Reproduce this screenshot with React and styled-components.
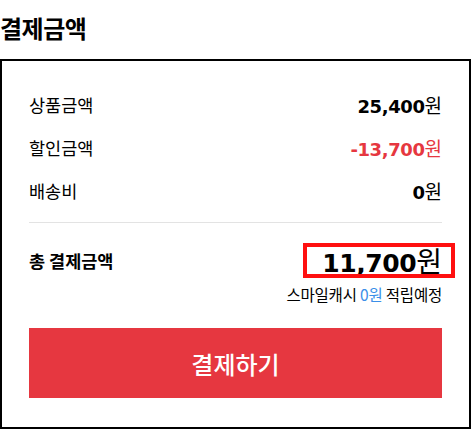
import React from "react";
import styled, { createGlobalStyle } from "styled-components";

const Global = createGlobalStyle`
  html, body { margin: 0; padding: 0; background: #fff; }
  body { font-family: "Noto Sans CJK KR", "Noto Sans", sans-serif; color: #000; }
  * { box-sizing: border-box; }
`;

const Page = styled.div`
  width: 471px;
  height: 429px;
  display: flex;
  flex-direction: column;
`;

const Title = styled.h2`
  margin: 0;
  padding-top: 11px;
  height: 59px;
  font-size: 24px;
  font-weight: 700;
  line-height: 34px;
  letter-spacing: -0.5px;
`;

const Box = styled.section`
  flex: 1;
  border: 2px solid #000;
  padding: 22px 27px 29px;
  display: flex;
  flex-direction: column;
`;

const Row = styled.div`
  display: flex;
  justify-content: space-between;
  align-items: center;
  height: 43px;
`;

const Label = styled.span`
  font-size: 17.5px;
  font-weight: ${(p) => (p.$bold ? 700 : 400)};
  line-height: 24px;
`;

const Value = styled.span`
  display: inline-flex;
  align-items: baseline;
  color: ${(p) => p.$color || "#000"};
`;

const Num = styled.span`
  font-family: "DejaVu Sans", Verdana, sans-serif;
  font-weight: 700;
  font-size: ${(p) => p.$size || 18}px;
  letter-spacing: -0.4px;
`;

const Won = styled.span`
  font-family: "Noto Sans CJK KR", sans-serif;
  font-weight: 400;
  font-size: ${(p) => p.$size || 19}px;
`;

const Divider = styled.hr`
  margin: 10px 0 0;
  border: 0;
  border-top: 1px solid #e3e3e3;
`;

const TotalSection = styled.div`
  display: flex;
  flex-direction: column;
  padding-top: 22px;
`;

const TotalRow = styled.div`
  display: flex;
  justify-content: space-between;
  align-items: center;
`;

const TotalValue = styled(Value)`
  height: 31px;
  line-height: 31px;
  outline: 4px solid #ff1010;
  outline-offset: -2px;
  padding: 0 11px 0 17px;
  margin-right: -11px;
`;

const Note = styled.div`
  align-self: flex-end;
  margin-top: 8px;
  font-size: 15.5px;
  line-height: 20px;
  letter-spacing: -0.2px;
`;

const Blue = styled.span`
  color: #3b8fe8;
`;

const PayButton = styled.button`
  margin-top: auto;
  height: 70px;
  border: 0;
  background: #e63740;
  color: #fff;
  font-family: "Noto Sans CJK KR", sans-serif;
  font-size: 24px;
  font-weight: 500;
  cursor: pointer;
`;

export default function App() {
  const rows = [
    { label: "상품금액", num: "25,400" },
    { label: "할인금액", num: "-13,700", color: "#e63740" },
    { label: "배송비", num: "0" },
  ];
  return (
    <>
      <Global />
      <Page>
        <Title>결제금액</Title>
        <Box>
          {rows.map((r) => (
            <Row key={r.label}>
              <Label>{r.label}</Label>
              <Value $color={r.color}>
                <Num>{r.num}</Num>
                <Won>원</Won>
              </Value>
            </Row>
          ))}
          <Divider />
          <TotalSection>
            <TotalRow>
              <Label $bold>총 결제금액</Label>
              <TotalValue>
                <Num $size={25}>11,700</Num>
                <Won $size={28}>원</Won>
              </TotalValue>
            </TotalRow>
            <Note>
              스마일캐시 <Blue>0원</Blue> 적립예정
            </Note>
          </TotalSection>
          <PayButton>결제하기</PayButton>
        </Box>
      </Page>
    </>
  );
}
